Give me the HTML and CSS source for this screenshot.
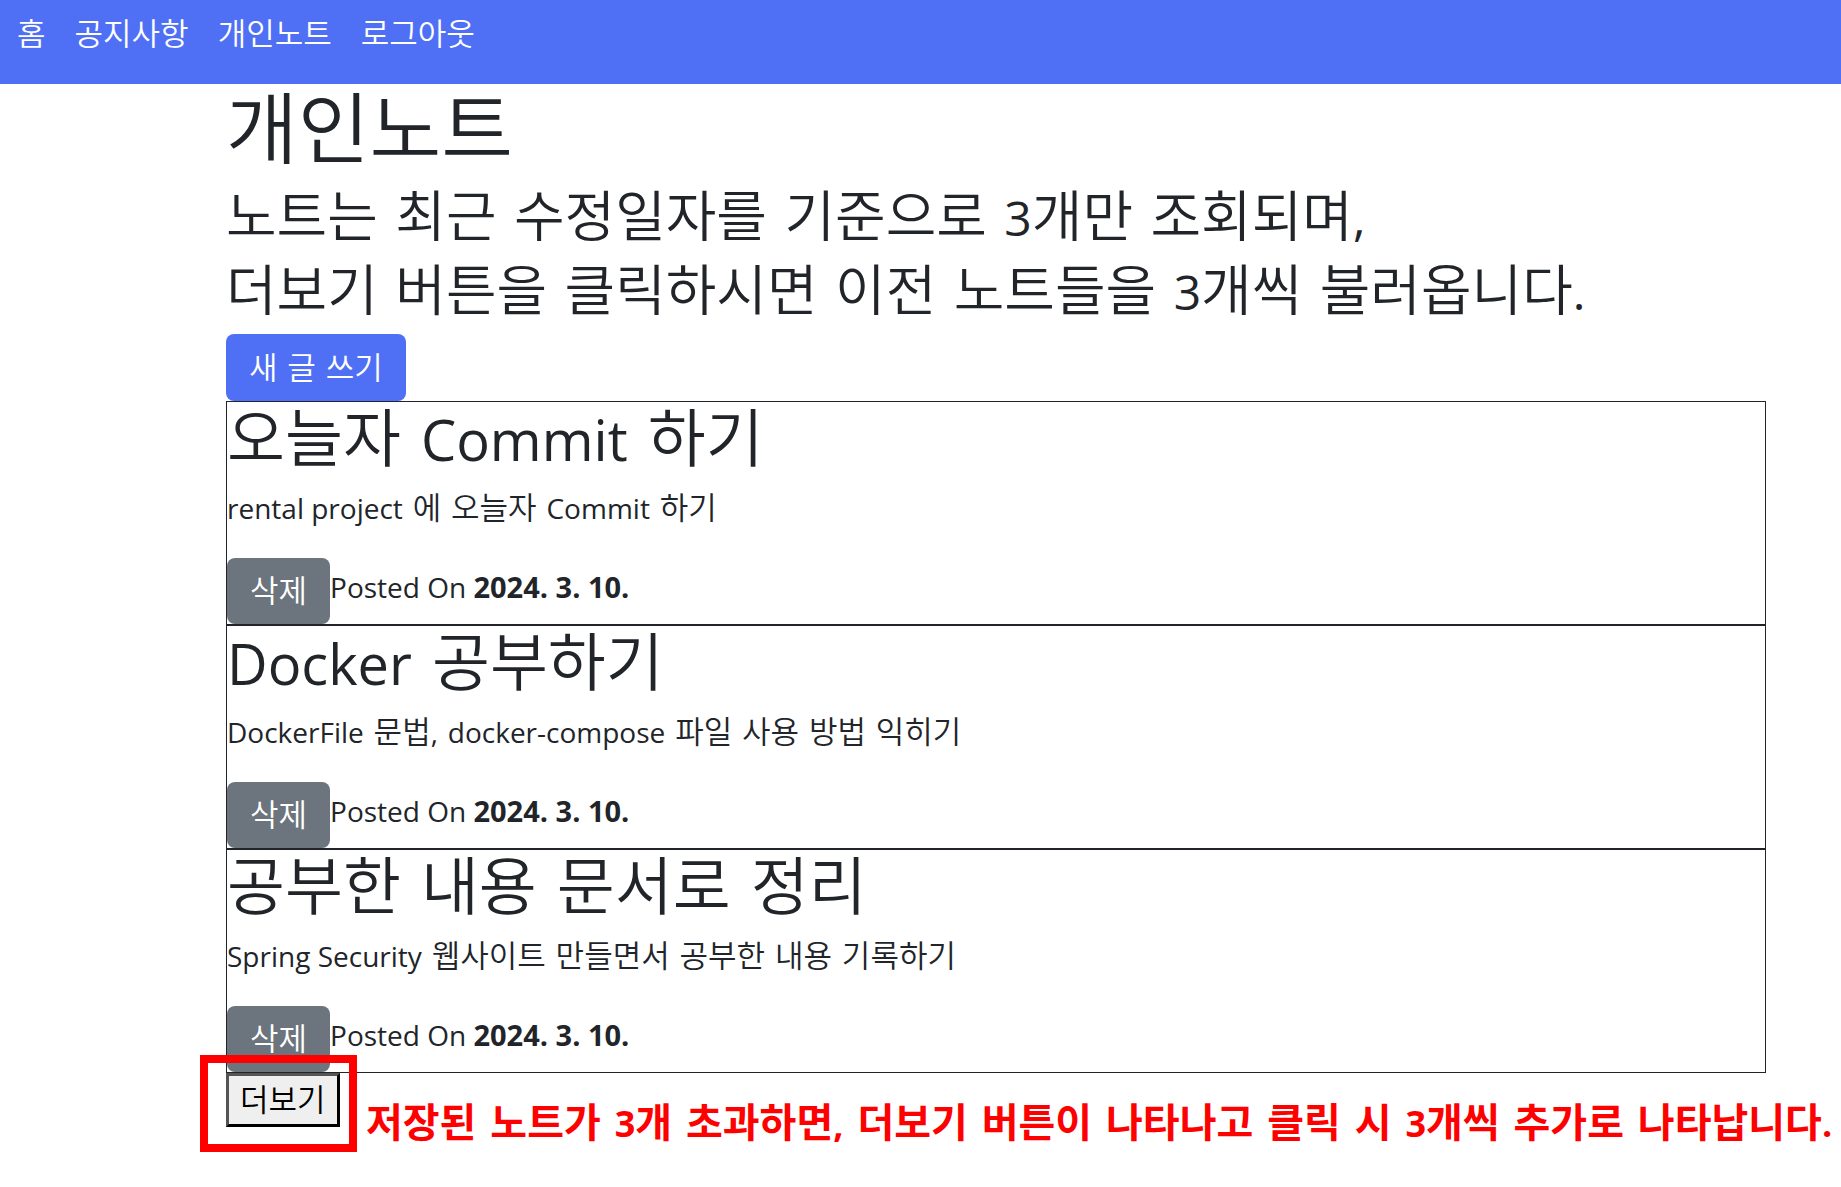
FILE: index.html
```html
<!DOCTYPE html>
<html lang="ko">
<head>
<meta charset="utf-8">
<title>개인노트</title>
<link rel="stylesheet" href="styles.css">
</head>
<body>
<nav class="navbar">
  <a href="#">홈</a>
  <a href="#">공지사항</a>
  <a href="#">개인노트</a>
  <a href="#">로그아웃</a>
</nav>
<main class="container">
  <h1 class="title">개인노트</h1>
  <p class="lead">노트는 최근 수정일자를 기준으로 <span class="latin">3</span>개만 조회되며<span class="latin">,</span><br>더보기 버튼을 클릭하시면 이전 노트들을 <span class="latin">3</span>개씩 불러옵니다<span class="latin">.</span></p>
  <button type="button" class="btn btn-primary">새 글 쓰기</button>
  <article class="note">
    <h2 class="note-title">오늘자 <span class="latin">Commit</span> 하기</h2>
    <p class="note-text"><span class="latin">rental project</span> 에 오늘자 <span class="latin">Commit</span> 하기</p>
    <div class="note-foot">
      <button type="button" class="btn btn-secondary">삭제</button>
      <span class="latin posted">Posted On <strong>2024. 3. 10.</strong></span>
    </div>
  </article>
  <article class="note">
    <h2 class="note-title"><span class="latin">Docker</span> 공부하기</h2>
    <p class="note-text"><span class="latin">DockerFile</span> 문법<span class="latin">,</span> <span class="latin">docker-compose</span> 파일 사용 방법 익히기</p>
    <div class="note-foot">
      <button type="button" class="btn btn-secondary">삭제</button>
      <span class="latin posted">Posted On <strong>2024. 3. 10.</strong></span>
    </div>
  </article>
  <article class="note">
    <h2 class="note-title">공부한 내용 문서로 정리</h2>
    <p class="note-text"><span class="latin">Spring Security</span> 웹사이트 만들면서 공부한 내용 기록하기</p>
    <div class="note-foot">
      <button type="button" class="btn btn-secondary">삭제</button>
      <span class="latin posted">Posted On <strong>2024. 3. 10.</strong></span>
    </div>
  </article>
  <div class="more">
    <button type="button" class="more-btn">더보기</button>
    <div class="callout-box"></div>
    <p class="callout-text">저장된 노트가 <span class="latin">3</span>개 초과하면<span class="latin">,</span> 더보기 버튼이 나타나고 클릭 시 <span class="latin">3</span>개씩 추가로 나타납니다<span class="latin">.</span></p>
  </div>
</main>
</body>
</html>
```

FILE: styles.css
```css
* {
  box-sizing: border-box;
}

body {
  min-height: 100vh;
  margin: 0;
  background: #fff;
  color: #212529;
  font-family: "DejaVu Sans", "Noto Sans CJK KR", sans-serif;
  font-size: 31px;
  font-weight: 350;
  line-height: 48px;
}

h1, h2, p {
  margin: 0;
  font-weight: 350;
}

button {
  font: inherit;
}

/* Latin letters and digits run slightly smaller than the Hangul */
.latin {
  font-family: "Open Sans", sans-serif;
  font-size: 28px;
  font-weight: 400;
  line-height: 1;
}

.navbar {
  display: flex;
  gap: 29px;
  padding: 10px 17px 26px;
  background: #4f70f5;
}

.navbar a {
  color: #fff;
  text-decoration: none;
}

.container {
  margin: 0 75px 0 226px;
}

.title {
  margin-bottom: 2px;
  font-size: 78px;
  line-height: 94px;
}

.lead {
  padding-bottom: 6px;
  font-size: 55px;
  line-height: 74px;
}

.lead .latin {
  font-size: 48px;
}

.btn {
  display: block;
  padding: 9px 23px;
  border: 0;
  border-radius: 8px;
  color: #fff;
}

.btn-primary {
  height: 67px;
  background: #4f70f5;
}

.btn-secondary {
  background: #6c757d;
}

.note {
  border: 1px solid #212529;
}

.note-title {
  margin-bottom: 6px;
  font-size: 63px;
  line-height: 76px;
}

.note-title .latin {
  font-size: 56px;
}

.note-text {
  margin-bottom: 26px;
}

.note-foot {
  display: flex;
  align-items: flex-start;
}

.posted {
  line-height: 58px;
}

strong {
  font-size: 29px;
  font-weight: 700;
}

.more {
  position: relative;
}

.more-btn {
  display: block;
  height: 54px;
  padding: 0 11px;
  border: 3px outset #000;
  background: #efefef;
  color: #000;
  line-height: 48px;
}

.callout-box {
  position: absolute;
  top: -18px;
  left: -26px;
  width: 157px;
  height: 97px;
  border: 8px solid #f00;
}

.callout-text {
  position: absolute;
  top: 26px;
  left: 140px;
  color: #f00;
  font-size: 40px;
  font-weight: 700;
  white-space: nowrap;
}

.callout-text .latin {
  font-size: 36px;
  font-weight: 700;
}
```
